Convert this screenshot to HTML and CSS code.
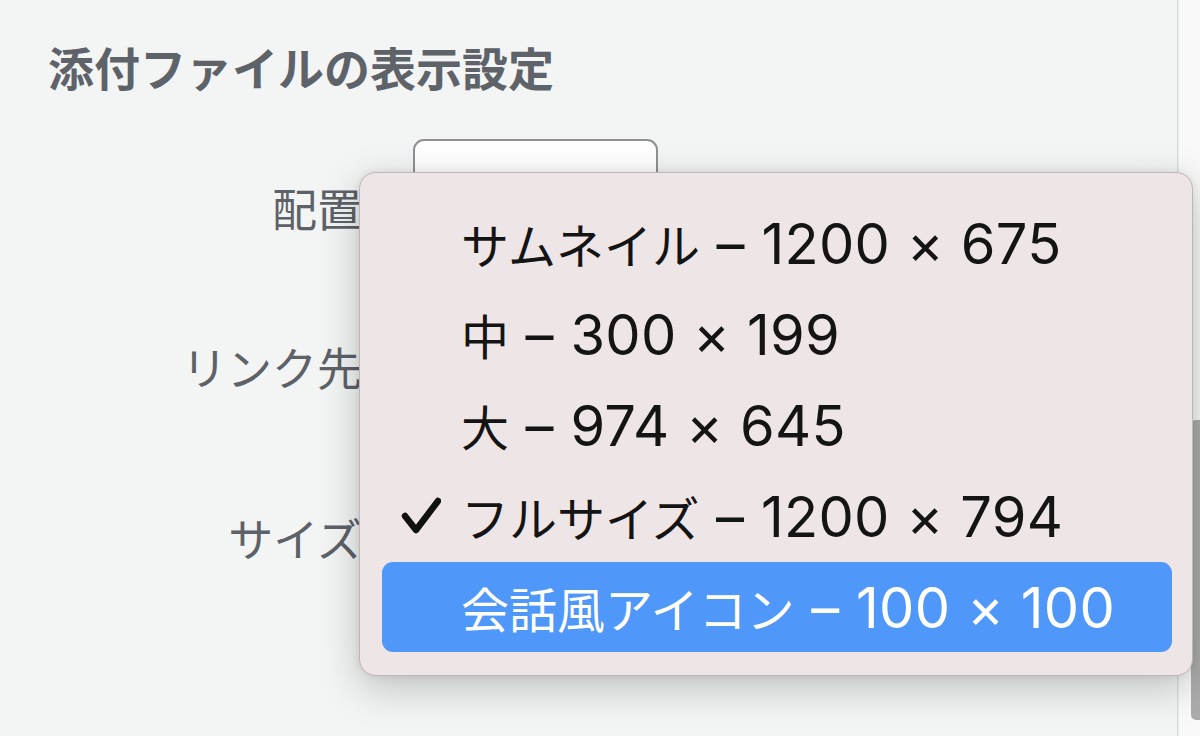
FILE: index.html
```html
<!DOCTYPE html>
<html lang="ja">
<head>
<meta charset="utf-8">
<title>添付ファイルの表示設定</title>
<link rel="stylesheet" href="styles.css">
</head>
<body>
<div class="window">
  <main class="panel">
    <h2 class="title">添付ファイルの表示設定</h2>
    <div class="form">
      <div class="row row-align">
        <span class="label">配置</span>
        <div class="select"></div>
      </div>
      <div class="row row-link">
        <span class="label">リンク先</span>
        <div class="select"></div>
      </div>
      <div class="row row-size">
        <span class="label">サイズ</span>
        <div class="select"></div>
      </div>
    </div>

    <ul class="menu">
      <li class="item"><span class="check"></span><span class="text"><span class="jp">サムネイル</span> – 1200 × 675</span></li>
      <li class="item"><span class="check"></span><span class="text"><span class="jp">中</span> – 300 × 199</span></li>
      <li class="item"><span class="check"></span><span class="text"><span class="jp">大</span> – 974 × 645</span></li>
      <li class="item"><span class="check"><svg viewBox="0 0 40 40" width="40" height="40"><path d="M4 19 L15 33 L37 4" fill="none" stroke="#111" stroke-width="6.5" stroke-linecap="round" stroke-linejoin="round"/></svg></span><span class="text"><span class="jp">フルサイズ</span> – 1200 × 794</span></li>
      <li class="item active"><span class="check"></span><span class="text"><span class="jp">会話風アイコン</span> – 100 × 100</span></li>
    </ul>
  </main>
  <div class="scrollbar"><div class="thumb"></div></div>
</div>
</body>
</html>
```

FILE: styles.css
```css
* { box-sizing: border-box; }

html, body {
  margin: 0;
  padding: 0;
  width: 1200px;
  height: 736px;
  overflow: hidden;
  background: #f3f4f4;
  font-family: "Noto Sans CJK JP", "Liberation Sans", sans-serif;
}

.window {
  display: flex;
  width: 1200px;
  height: 736px;
}

.panel {
  position: relative;
  flex: 1;
  height: 100%;
  background: #f3f4f4;
  border-right: 1px solid #d9dadb;
}

.title {
  margin: 0;
  padding: 43px 0 0 48px;
  font-size: 46px;
  line-height: 1;
  font-weight: 700;
  color: #5e6269;
}

.form {
  padding-top: 50px;
}

.row {
  display: grid;
  grid-template-columns: 362px 245px;
  column-gap: 51px;
  align-items: start;
}

.row-align { height: 159px; }
.row-link { height: 171px; }
.row-size { height: 120px; }

.label {
  justify-self: end;
  margin-top: 46px;
  font-size: 45px;
  line-height: 1;
  color: #5d6168;
}

.select {
  height: 64px;
  background: #ffffff;
  border: 2px solid #8f9092;
  border-radius: 11px;
}

.menu {
  position: absolute;
  left: 359px;
  top: 172px;
  width: 834px;
  height: 504px;
  margin: 0;
  padding: 25px 20px 24px 22px;
  list-style: none;
  background: #eee5e6;
  border: 1px solid #bdb6b7;
  border-radius: 17px;
  box-shadow: 0 12px 40px rgba(0, 0, 0, 0.22), 0 0 8px rgba(0, 0, 0, 0.08);
  z-index: 10;
}

.item {
  display: flex;
  align-items: center;
  height: 91px;
  padding-left: 19px;
  border-radius: 11px;
  color: #141414;
  white-space: pre;
}

.item .text {
  font-family: "Inter", "Noto Sans CJK JP", sans-serif;
  font-size: 56px;
  line-height: 1;
  word-spacing: 0.5px;
  letter-spacing: 0.3px;
  margin-top: 1px;
}

.item .jp {
  font-family: "Noto Sans CJK JP", sans-serif;
  font-size: 48px;
  letter-spacing: 0;
}

.check {
  display: flex;
  align-items: center;
  width: 60px;
  height: 40px;
}

.active {
  height: 90px;
  background: #4f97f8;
  color: #ffffff;
}

.scrollbar {
  position: relative;
  width: 22px;
  height: 100%;
  background: #f9f9f9;
  border-left: 1px solid #ececec;
}

.thumb {
  position: absolute;
  right: 0;
  top: 420px;
  width: 9px;
  height: 300px;
  background: #acacac;
  border-radius: 5px 0 0 5px;
}
```
